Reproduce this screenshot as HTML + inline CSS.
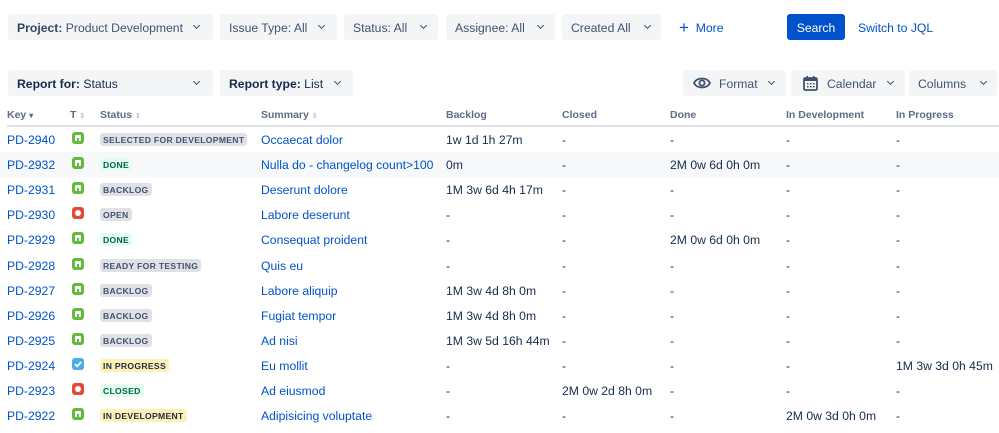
<!DOCTYPE html><html><head><style>
body{margin:0;width:999px;height:433px;background:#fff;font-family:"Liberation Sans",Arial,sans-serif;color:#172b4d;font-size:12.2px;position:relative;overflow:hidden}
.b{position:absolute;height:26px;background:#f4f5f7;border-radius:3px;line-height:28px;box-sizing:border-box;padding-left:9px;color:#42526e;font-size:12.2px}
.b b{color:#344563}
.chev{position:absolute;top:9px;width:4px;height:4px;border-right:1.5px solid #42526e;border-bottom:1.5px solid #42526e;transform:rotate(45deg)}
.h{position:absolute;top:109px;font-size:10.5px;color:#5e6c84;font-weight:bold}
.r{position:absolute;left:0;width:999px;height:25px}
.c{position:absolute;top:6px;white-space:nowrap}
.k,.s{color:#0052cc}
.lz{position:absolute;top:6px;font-size:8.6px;font-weight:bold;padding:0 3px;height:13px;line-height:14px;border-radius:3px;letter-spacing:.3px}
.g{background:#dfe1e6;color:#42526e}.d{background:#e3fcef;color:#006644}.y{background:#fff0b3;color:#172b4d}
.ic{position:absolute;left:72px;top:5px;width:12px;height:12px;border-radius:3px}
</style></head><body>
<div class="b" style="left:8px;top:14px;width:205px"><b>Project:</b> Product Development<i class="chev" style="left:186px"></i></div>
<div class="b" style="left:220px;top:14px;width:117px">Issue Type: All<i class="chev" style="left:99px"></i></div>
<div class="b" style="left:344px;top:14px;width:94px">Status: All<i class="chev" style="left:77px"></i></div>
<div class="b" style="left:446px;top:14px;width:109px">Assignee: All<i class="chev" style="left:92px"></i></div>
<div class="b" style="left:562px;top:14px;width:99px">Created All<i class="chev" style="left:83px"></i></div>
<div style="position:absolute;left:679px;top:17px;color:#0052cc;font-size:12.2px"><span style="font-size:17px;position:relative;top:1px">+</span>&nbsp; More</div>
<div style="position:absolute;left:787px;top:14px;width:58px;height:26px;background:#0052cc;color:#fff;border-radius:3px;text-align:center;line-height:28px">Search</div>
<div style="position:absolute;left:858px;top:21px;color:#0052cc">Switch to JQL</div>
<div class="b" style="left:8px;top:70px;width:205px;color:#172b4d"><b style="color:#172b4d">Report for:</b> Status<i class="chev" style="left:186px"></i></div>
<div class="b" style="left:220px;top:70px;width:133px;color:#172b4d"><b style="color:#172b4d">Report type:</b> List<i class="chev" style="left:115px"></i></div>
<div class="b" style="left:683px;top:70px;width:103px;padding-left:36px">Format<i class="chev" style="left:86px"></i>
<svg style="position:absolute;left:10px;top:6px" width="18" height="14" viewBox="0 0 18 14"><path d="M1 7C4 1 14 1 17 7C14 13 4 13 1 7Z" fill="none" stroke="#42526e" stroke-width="1.8"/><circle cx="9" cy="7" r="2.6" fill="none" stroke="#42526e" stroke-width="1.8"/></svg></div>
<div class="b" style="left:791px;top:70px;width:114px;padding-left:36px">Calendar<i class="chev" style="left:97px"></i>
<svg style="position:absolute;left:12px;top:6px" width="15" height="15" viewBox="0 0 15 15"><rect x="1" y="2" width="13" height="12" rx="1.5" fill="none" stroke="#42526e" stroke-width="1.8"/><rect x="1" y="2" width="13" height="3" fill="#42526e"/><rect x="3.5" y="0" width="1.5" height="3" fill="#42526e"/><rect x="10" y="0" width="1.5" height="3" fill="#42526e"/><g fill="#42526e"><rect x="4" y="7" width="1.5" height="1.5"/><rect x="7" y="7" width="1.5" height="1.5"/><rect x="10" y="7" width="1.5" height="1.5"/><rect x="4" y="10" width="1.5" height="1.5"/><rect x="7" y="10" width="1.5" height="1.5"/><rect x="10" y="10" width="1.5" height="1.5"/></g></svg></div>
<div class="b" style="left:909px;top:70px;width:88px">Columns<i class="chev" style="left:72px"></i></div>
<div class="h" style="left:7px">Key <span style="font-size:8px">▾</span></div>
<div class="h" style="left:70px">T <span style="font-size:7px;color:#c1c7d0">⇕</span></div>
<div class="h" style="left:100px">Status <span style="font-size:7px;color:#c1c7d0">⇕</span></div>
<div class="h" style="left:261px">Summary <span style="font-size:7px;color:#c1c7d0">⇕</span></div>
<div class="h" style="left:446px">Backlog</div><div class="h" style="left:562px">Closed</div><div class="h" style="left:670px">Done</div><div class="h" style="left:786px">In Development</div><div class="h" style="left:896px">In Progress</div>
<div style="position:absolute;left:7px;top:125px;width:992px;height:2px;background:#dfe1e6"></div>
<div id="t"></div>
<script>
var rows=[["PD-2940","s","SELECTED FOR DEVELOPMENT","g","Occaecat dolor","1w 1d 1h 27m","-","-","-","-"],
["PD-2932","s","DONE","d","Nulla do - changelog count>100","0m","-","2M 0w 6d 0h 0m","-","-"],
["PD-2931","s","BACKLOG","g","Deserunt dolore","1M 3w 6d 4h 17m","-","-","-","-"],
["PD-2930","b","OPEN","g","Labore deserunt","-","-","-","-","-"],
["PD-2929","s","DONE","d","Consequat proident","-","-","2M 0w 6d 0h 0m","-","-"],
["PD-2928","s","READY FOR TESTING","g","Quis eu","-","-","-","-","-"],
["PD-2927","s","BACKLOG","g","Labore aliquip","1M 3w 4d 8h 0m","-","-","-","-"],
["PD-2926","s","BACKLOG","g","Fugiat tempor","1M 3w 4d 8h 0m","-","-","-","-"],
["PD-2925","s","BACKLOG","g","Ad nisi","1M 3w 5d 16h 44m","-","-","-","-"],
["PD-2924","t","IN PROGRESS","y","Eu mollit","-","-","-","-","1M 3w 3d 0h 45m"],
["PD-2923","b","CLOSED","d","Ad eiusmod","-","2M 0w 2d 8h 0m","-","-","-"],
["PD-2922","s","IN DEVELOPMENT","y","Adipisicing voluptate","-","-","-","2M 0w 3d 0h 0m","-"]];
var xs=[446,562,670,786,896],h="";
rows.forEach(function(r,i){var top=127+i*25.1;
var ic=r[1]=="s"?'<div class="ic" style="background:#63ba3c"><div style="position:absolute;left:3px;top:3px;width:6px;height:6px;background:#fff;border-radius:1px"></div><div style="position:absolute;left:5px;top:6px;width:2px;height:3px;background:#63ba3c"></div></div>':r[1]=="b"?'<div class="ic" style="background:#e5493a"><div style="position:absolute;left:3px;top:3px;width:6px;height:6px;background:#fff;border-radius:50%"></div></div>':'<div class="ic" style="background:#4bade8"><svg width="12" height="12" style="position:absolute;left:0;top:0"><path d="M3 6.2L5.2 8.4L9.2 3.8" fill="none" stroke="#fff" stroke-width="1.7"/></svg></div>';
h+='<div class="r" style="top:'+top+'px;'+(i==1?'background:#f7f8f9;':'')+'"><div class="c k" style="left:7px">'+r[0]+'</div>'+ic+'<div class="lz '+r[3]+'" style="left:100px">'+r[2]+'</div><div class="c s" style="left:261px">'+r[4]+'</div>';
for(var j=0;j<5;j++)h+='<div class="c" style="left:'+xs[j]+'px">'+r[5+j]+'</div>';h+='</div>';});
document.getElementById('t').innerHTML=h;
</script></body></html>
